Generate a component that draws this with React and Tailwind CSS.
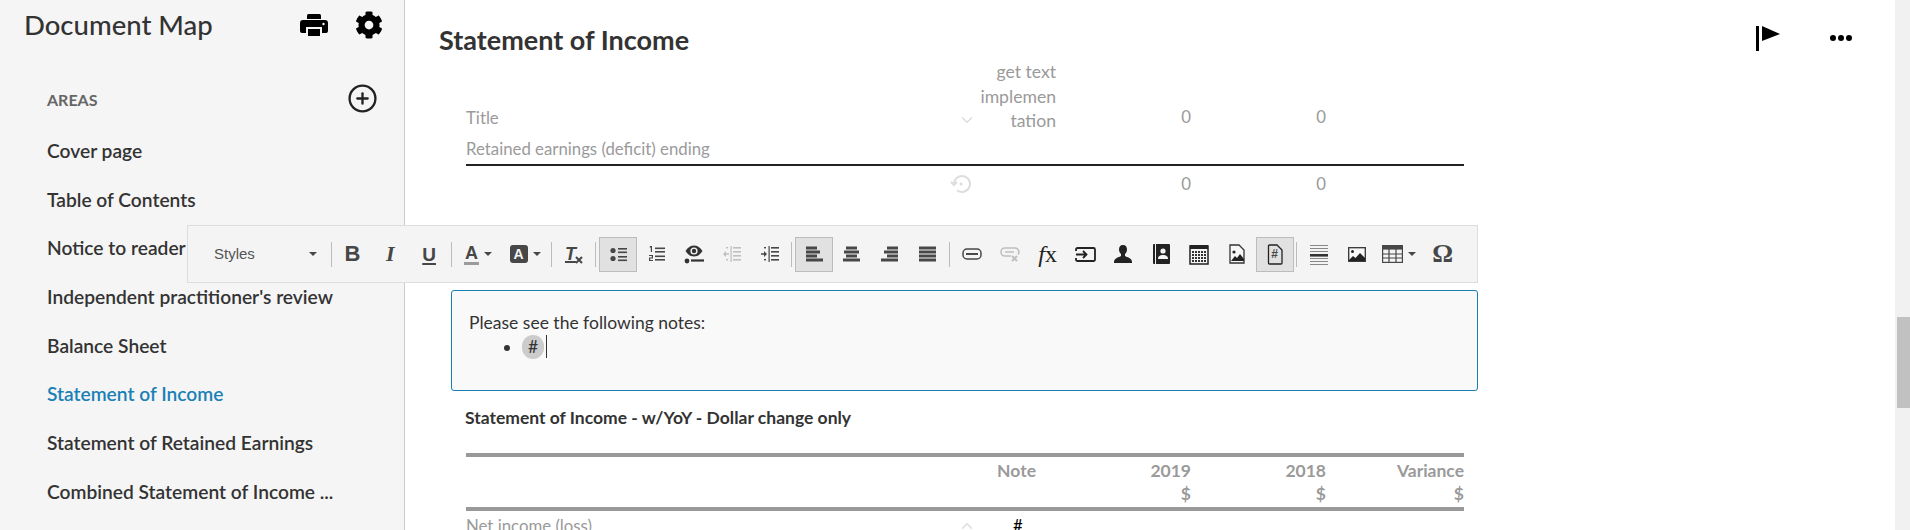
import { CirclePlus, ChevronDown, ChevronUp } from 'lucide-react';
import { FaCog } from 'react-icons/fa';

const areas = [
  'Cover page',
  'Table of Contents',
  'Notice to reader',
  "Independent practitioner's review",
  'Balance Sheet',
  'Statement of Income',
  'Statement of Retained Earnings',
  'Combined Statement of Income ...',
];

const rowGrid = 'grid grid-cols-[484px_30px_76px_135px_135px_138px] ml-[15px]';

function Svg({ children, w = 20, h = 20 }) {
  return (
    <svg width={w} height={h} viewBox={`0 0 ${w} ${h}`} fill="#474747" stroke="none">
      {children}
    </svg>
  );
}

function Bars({ rows }) {
  return (
    <Svg w={17} h={16}>
      {rows.map(([x, w], i) => (
        <rect key={i} x={x} y={0.5 + i * 4} width={w} height={3} />
      ))}
    </Svg>
  );
}

function Caret() {
  return <span className="ml-[5px] border-x-[4px] border-t-[4px] border-x-transparent border-t-[#474747]" />;
}

function Sep() {
  return <div className="w-px h-[25px] bg-[#bcbcbc] ml-[2.5px] mr-[3px] shrink-0" />;
}

function Btn({ children, active, wide, faint }) {
  return (
    <div
      className={`flex items-center justify-center h-[35px] shrink-0 border ${wide ? 'w-[47px]' : 'w-[37.85px]'} ${
        active ? 'bg-[#e1e1e1] border-[#bcbcbc]' : 'border-transparent'
      } ${faint ? 'opacity-30' : ''}`}
    >
      {children}
    </div>
  );
}

function IndentIcon({ reverse }) {
  return (
    <Svg w={18} h={16}>
      <rect x={10} y={1} width={8} height={1.6} />
      <rect x={10} y={5} width={8} height={1.6} />
      <rect x={10} y={9} width={8} height={1.6} />
      <rect x={10} y={13} width={8} height={1.6} />
      <rect x={7.5} y={0} width={1.2} height={16} />
      <rect x={3} y={1} width={2} height={1.4} />
      <rect x={3} y={13} width={2} height={1.4} />
      <path d={reverse ? 'M0 7.300h3V5l3 3-3 3V8.700H0z' : 'M6 7.300H3V5L0 8l3 3V8.700h3z'} />
    </Svg>
  );
}

function PrinterIcon() {
  return (
    <svg width="28" height="22" viewBox="0 0 28 22" fill="black">
      <path d="M7 1.500A1.500 1.500 0 0 1 8.500 0h11A1.500 1.500 0 0 1 21 1.500V5H7z" />
      <path d="M3 6h22a3 3 0 0 1 3 3v8a2 2 0 0 1-2 2h-4v-6H6v6H2a2 2 0 0 1-2-2V9a3 3 0 0 1 3-3z" />
      <rect x="8" y="15" width="12" height="5" />
      <rect x="8" y="20" width="12" height="2" />
      <circle cx="23.500" cy="10" r="1.200" fill="#f5f5f5" />
    </svg>
  );
}

function Toolbar() {
  const glyph = 'font-["Liberation_Sans",sans-serif] text-[#474747] leading-none';
  return (
    <div className="absolute left-[187px] top-[225px] w-[1291px] h-[58px] bg-[#f4f4f4] border border-[#dddddd] flex items-center">
      <div className="w-[140px] flex items-center justify-between pl-[26px] pr-[11px] shrink-0">
        <span className='font-["Liberation_Sans",sans-serif] text-[15px] text-[#555555]'>Styles</span>
        <span className="border-x-[4.5px] border-t-[4.5px] border-x-transparent border-t-[#474747]" />
      </div>
      <Sep />
      <Btn><span className={`${glyph} font-bold text-[22px] -ml-[2px]`}>B</span></Btn>
      <Btn><span className="font-['Liberation_Serif',serif] text-[#474747] leading-none font-bold italic text-[22px] -ml-[2px]">I</span></Btn>
      <Btn><span className={`${glyph} font-bold text-[19px] underline decoration-2 underline-offset-2`}>U</span></Btn>
      <Sep />
      <Btn wide>
        <span className={`${glyph} font-bold text-[18px] border-b-[3px] border-[#9b9b9b] px-px`}>A</span>
        <Caret />
      </Btn>
      <Btn wide>
        <span className="flex items-center justify-center w-[18px] h-[18px] bg-[#474747] rounded-[3px] text-[#f4f4f4] font-['Liberation_Sans',sans-serif] font-bold text-[14px] leading-none">A</span>
        <Caret />
      </Btn>
      <Sep />
      <Btn>
        <span className="flex items-start">
          <span className={`${glyph} font-bold italic text-[18px] underline decoration-2`}>T</span>
          <svg width="8" height="8" viewBox="0 0 8 8" className="mt-[11px] -ml-px" stroke="#474747" strokeWidth="2">
            <path d="M1 1l6 6M7 1L1 7" />
          </svg>
        </span>
      </Btn>
      <Sep />
      <Btn active>
        <Svg w={17} h={15}>
          <circle cx={3} cy={3.5} r={2.6} />
          <circle cx={3} cy={11.5} r={2.6} />
          <rect x={8} y={1} width={9} height={1.6} />
          <rect x={8} y={4.5} width={9} height={1.6} />
          <rect x={8} y={9} width={9} height={1.6} />
          <rect x={8} y={12.5} width={9} height={1.6} />
        </Svg>
      </Btn>
      <Btn>
        <Svg w={17} h={16}>
          <path d="M2 0h2v6H2.800V1.400H1.600zM1 9h4v3.500H2.200V14H5v1H1v-3.500h2.800V10H1z" />
          <rect x={7} y={1.5} width={10} height={1.6} />
          <rect x={7} y={5} width={10} height={1.6} />
          <rect x={7} y={9.5} width={10} height={1.6} />
          <rect x={7} y={13} width={10} height={1.6} />
        </Svg>
      </Btn>
      <Btn>
        <svg width="20" height="20" viewBox="0 0 20 20">
          <path d="M1.500 7C4 3 7 1.500 10 1.500S16 3 18.500 7C16 11 13 12.500 10 12.500S4 11 1.500 7z" fill="#333333" />
          <circle cx="10" cy="7" r="3.600" fill="#f4f4f4" />
          <circle cx="10" cy="7" r="2.200" fill="#333333" />
          <circle cx="3" cy="17" r="2.400" fill="#333333" />
          <rect x="7" y="15.400" width="13" height="2.200" fill="#333333" />
        </svg>
      </Btn>
      <Btn faint><IndentIcon /></Btn>
      <Btn><IndentIcon reverse /></Btn>
      <Sep />
      <Btn active><Bars rows={[[0, 11], [0, 14], [0, 11], [0, 17]]} /></Btn>
      <Btn><Bars rows={[[3, 11], [1, 15], [3, 11], [0, 17]]} /></Btn>
      <Btn><Bars rows={[[6, 11], [3, 14], [6, 11], [0, 17]]} /></Btn>
      <Btn><Bars rows={[[0, 17], [0, 17], [0, 17], [0, 17]]} /></Btn>
      <Sep />
      <Btn>
        <svg width="20" height="12" viewBox="0 0 20 12" fill="none" stroke="#474747" strokeWidth="1.500">
          <rect x="1" y="1" width="18" height="10" rx="4" />
          <path d="M4 6h12" strokeWidth="2" />
        </svg>
      </Btn>
      <Btn faint>
        <svg width="20" height="16" viewBox="0 0 20 16" fill="none" stroke="#474747" strokeWidth="1.600">
          <path d="M11 10H5a4 4 0 0 1 0-8h10a4 4 0 0 1 3 6.500M5 6h9" />
          <path d="M12 10l5 5M17 10l-5 5" strokeWidth="2" />
        </svg>
      </Btn>
      <Btn>
        <span className="font-['Liberation_Serif',serif] text-[24px] text-[#222222] leading-none">
          <span className="italic">f</span>x
        </span>
      </Btn>
      <Btn>
        <svg width="21" height="15" viewBox="0 0 21 15" fill="none" stroke="#222222" strokeWidth="1.800">
          <path d="M1 4V2.500A1.500 1.500 0 0 1 2.500 1h16A1.500 1.500 0 0 1 20 2.500v10a1.500 1.500 0 0 1-1.500 1.500h-16A1.500 1.500 0 0 1 1 12.500V11" />
          <path d="M1 7.500h10M8 4l3.500 3.500L8 11" />
        </svg>
      </Btn>
      <Btn>
        <svg width="20" height="18" viewBox="0 0 20 18" fill="#222222">
          <path d="M10 0c2.800 0 4 2 4 4.500 0 2-1 3.500-2 4.500v2c2 1.200 7 2 7 6v1H1v-1c0-4 5-4.800 7-6V9C7 8 6 6.500 6 4.500 6 2 7.200 0 10 0z" />
        </svg>
      </Btn>
      <Btn>
        <svg width="18" height="20" viewBox="0 0 18 20">
          <rect x="1" y="0" width="17" height="20" rx="1" fill="#222222" />
          <rect x="3" y="0" width="1" height="20" fill="#f4f4f4" />
          <circle cx="11" cy="7" r="2.600" fill="#f4f4f4" />
          <path d="M6 15c0-3 2-4 5-4s5 1 5 4z" fill="#f4f4f4" />
        </svg>
      </Btn>
      <Btn>
        <svg width="20" height="21" viewBox="0 0 20 21">
          <rect x="1" y="2" width="18" height="18" fill="none" stroke="#222222" strokeWidth="1.500" />
          <rect x="1" y="1" width="18" height="4" fill="#222222" />
          {[8, 11, 14, 17].map((y) =>
            [4, 7, 10, 13, 16].map((x) => <rect key={`${x}-${y}`} x={x - 1} y={y - 1} width="2" height="2" fill="#333333" />),
          )}
        </svg>
      </Btn>
      <Btn>
        <svg width="16" height="20" viewBox="0 0 16 20">
          <path d="M1 1h9l5 5v13H1z" fill="#f8f8f8" stroke="#333333" strokeWidth="1.300" />
          <circle cx="5" cy="8" r="1.600" fill="#222222" />
          <path d="M2 17l4-5 2 2 3-4 4 5v2z" fill="#222222" />
        </svg>
      </Btn>
      <Btn active>
        <span className="relative flex items-center justify-center w-[16px] h-[21px]">
          <svg width="16" height="21" viewBox="0 0 16 21" className="absolute inset-0">
            <path d="M1.500 2a1 1 0 0 1 1-1H10l5 5v13a1 1 0 0 1-1 1H2.500a1 1 0 0 1-1-1z" fill="none" stroke="#222222" strokeWidth="1.300" />
          </svg>
          <span className={`${glyph} relative font-bold text-[12px] text-[#222222]`}>#</span>
        </span>
      </Btn>
      <Sep />
      <Btn>
        <Svg w={18} h={21}>
          <rect x={0} y={1} width={18} height={1} fill="#888888" />
          <rect x={0} y={4} width={18} height={1} fill="#888888" />
          <rect x={0} y={7} width={18} height={1} fill="#888888" />
          <rect x={0} y={10} width={18} height={2.600} fill="#333333" />
          <rect x={0} y={14} width={18} height={1} fill="#888888" />
          <rect x={0} y={17} width={18} height={1} fill="#888888" />
          <rect x={0} y={20} width={18} height={1} fill="#888888" />
        </Svg>
      </Btn>
      <Btn>
        <svg width="18" height="15" viewBox="0 0 18 15">
          <rect x="0.700" y="0.700" width="16.600" height="13.600" fill="#f8f8f8" stroke="#333333" strokeWidth="1.300" />
          <circle cx="4.500" cy="4.500" r="1.500" fill="#222222" />
          <path d="M1 13l4-4 2.500 2L12 6l5 5v3H1z" fill="#222222" />
        </svg>
      </Btn>
      <Btn wide>
        <svg width="21" height="18" viewBox="0 0 21 18" fill="none" stroke="#474747" strokeWidth="1.200">
          <rect x="0.600" y="0.600" width="19.800" height="16.800" />
          <rect x="0" y="0" width="21" height="4" fill="#474747" />
          <path d="M7 4v13M14 4v13M1 9h19M1 13h19" />
        </svg>
        <Caret />
      </Btn>
      <Btn>
        <span className="font-['Liberation_Serif',serif] font-bold text-[26px] text-[#474747] leading-none ml-[2px]">Ω</span>
      </Btn>
    </div>
  );
}

export default function App() {
  return (
    <div className="relative flex h-[530px] w-[1910px] overflow-hidden bg-white font-['Lato',sans-serif] text-[16.8px]">
      <aside className="w-[405px] h-full shrink-0 bg-[#f5f5f5] border-r border-[#cccccc]">
        <div className="flex items-center h-[50px] pl-[24px]">
          <h1 className="text-[27.5px] font-medium text-[#333333] w-[276px]">Document Map</h1>
          <PrinterIcon />
          <FaCog className="text-black text-[28px] ml-[27px]" />
        </div>
        <div className="flex items-center justify-between h-[28px] mt-[34px] pl-[47px] pr-[26px]">
          <span className="text-[16px] font-bold text-[#666666] mt-[3px]">AREAS</span>
          <CirclePlus className="text-[#222222]" size={31} strokeWidth={1.8} />
        </div>
        <ul className="mt-[15px] pl-[47px]">
          {areas.map((name) => (
            <li
              key={name}
              className={`h-[48.7px] leading-[48.7px] text-[19.2px] font-semibold ${
                name === 'Statement of Income' ? 'text-[#1a80b6]' : 'text-[#333333]'
              }`}
            >
              {name}
            </li>
          ))}
        </ul>
      </aside>

      <main className="flex-1 min-w-0">
        <div className="flex items-start justify-between h-[60px] pl-[34px] pr-[43px]">
          <h2 className="text-[27px] font-bold text-[#333333] mt-[20px]">Statement of Income</h2>
          <div className="flex items-start gap-[50px]">
            <svg width="24" height="25" viewBox="0 0 24 25" fill="black" className="mt-[26px]">
              <rect x="0" y="0" width="3" height="25" />
              <path d="M6 0l18 8-18 7z" />
            </svg>
            <svg width="22" height="6" viewBox="0 0 22 6" fill="black" className="mt-[35px]">
              <circle cx="3" cy="3" r="3" />
              <circle cx="11" cy="3" r="3" />
              <circle cx="19" cy="3" r="3" />
            </svg>
          </div>
        </div>

        <div className="pl-[46px] w-[1073px] text-[#9a9a9a]">
          <div className={`${rowGrid} h-[73px]`}>
            <span className="self-end pb-[5px] leading-6">Title</span>
            <span className="self-end pb-[6px] flex justify-center pl-[4px]">
              <ChevronDown size={18} className="text-[#dddddd]" />
            </span>
            <span className="text-right text-[17.6px] leading-[24.5px] self-end pb-[1px]">
              get text
              <br />
              implemen
              <br />
              tation
            </span>
            <span className="text-right self-end pb-[6px] leading-6">0</span>
            <span className="text-right self-end pb-[6px] leading-6">0</span>
            <span />
          </div>
          <div className="ml-[15px] mt-[4px] w-[998px] h-[29px] leading-6 border-b-2 border-[#222222]">
            Retained earnings (deficit) ending
          </div>
          <div className={`${rowGrid} h-[35px] items-center`}>
            <span />
            <span className="flex justify-center pr-[8px]">
              <svg width="22" height="22" viewBox="0 0 22 22" fill="none" stroke="#dddddd" strokeWidth="2">
                <path d="M4 11a8 8 0 1 1 3 6.200" />
                <path d="M1 9l3 3 3-3" />
                <circle cx="11" cy="11" r="1.500" fill="#dddddd" stroke="none" />
              </svg>
            </span>
            <span />
            <span className="text-right">0</span>
            <span className="text-right">0</span>
            <span />
          </div>

          <div className="mt-[89px] h-[101px] w-[1027px] bg-[#f9f9f9] border border-[#1a7fb5] rounded-[3px] pl-[17px] pt-[20px] text-[#333333] text-[17.5px] leading-[24px]">
            <p>Please see the following notes:</p>
            <ul className="list-disc pl-[53px]">
              <li>
                <span className="inline-block bg-[#cccccc] rounded-[11px] w-[22px] h-[24px] text-center align-top">#</span>
                <span className="inline-block w-px h-[23px] bg-[#333333] ml-[2px] align-top" />
              </li>
            </ul>
          </div>

          <h3 className="ml-[14px] mt-[15px] h-[24px] leading-6 font-bold text-[17.5px] text-[#333333]">
            Statement of Income - w/YoY - Dollar change only
          </h3>

          <div className="ml-[15px] mt-[23px] w-[998px] h-[4px] bg-[#999999]" />
          <div className={`${rowGrid} font-bold text-[17.5px] leading-[23px] pt-[1.5px] h-[50px]`}>
            <span />
            <span />
            <span className="text-right pr-[20px]">Note</span>
            <span className="text-right">
              2019
              <br />$
            </span>
            <span className="text-right">
              2018
              <br />$
            </span>
            <span className="text-right">
              Variance
              <br />$
            </span>
          </div>
          <div className="ml-[15px] w-[998px] h-[4px] bg-[#999999]" />
          <div className={`${rowGrid} h-[30px] items-center`}>
            <span>Net income (loss)</span>
            <span className="flex justify-center pl-[4px]">
              <ChevronUp size={18} className="text-[#dddddd]" />
            </span>
            <span className="text-black pl-[33px]">#</span>
          </div>
        </div>
      </main>

      <div className="w-[15px] h-full shrink-0 bg-[#f1f1f1] pl-[2px] pt-[317px]">
        <div className="h-[91px] bg-[#c1c1c1]" />
      </div>

      <Toolbar />
    </div>
  );
}
